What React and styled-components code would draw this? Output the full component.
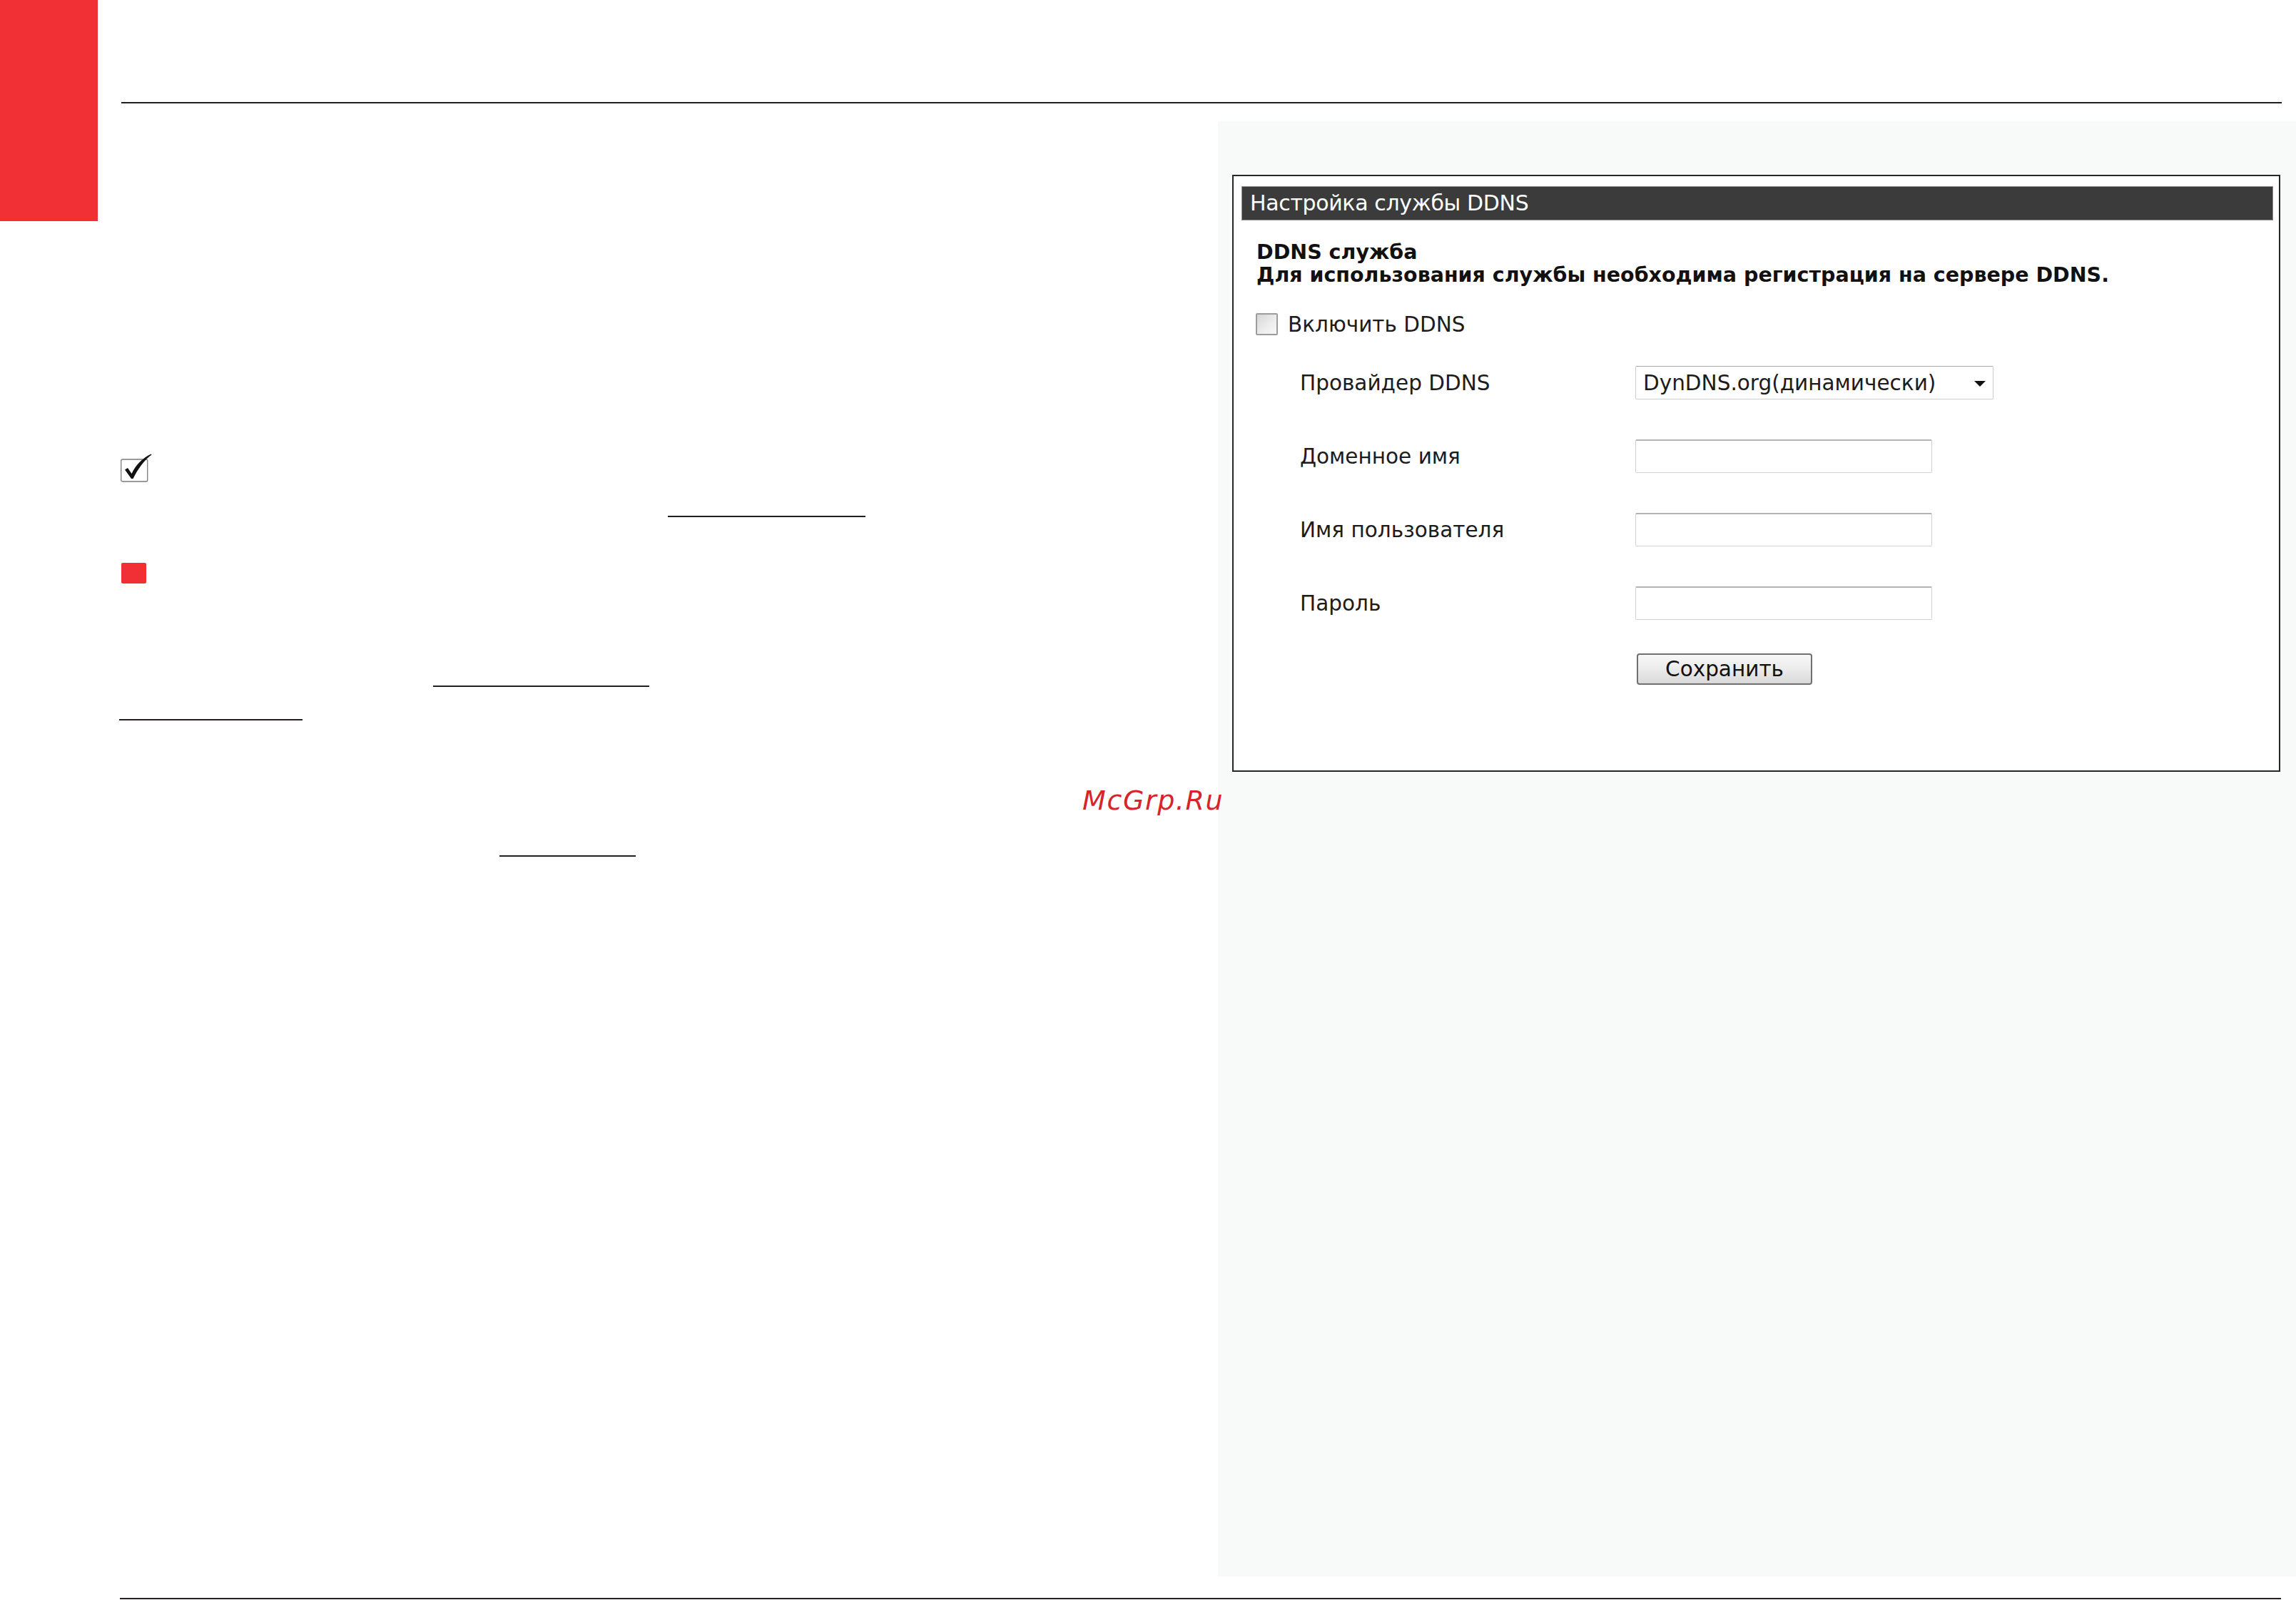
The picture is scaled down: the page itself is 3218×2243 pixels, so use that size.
import React from "react";
import styled, { createGlobalStyle } from "styled-components";

const Global = createGlobalStyle`
  html, body { margin: 0; padding: 0; background: #ffffff; }
  body { width: 3218px; height: 2243px; overflow: hidden; font-family: "DejaVu Sans", Verdana, sans-serif; }
  * { box-sizing: border-box; }
`;

const Page = styled.div`
  display: flex;
  width: 3218px;
  height: 2243px;
  background: #ffffff;
`;

const RedTab = styled.div`
  flex-shrink: 0;
  width: 137px;
  height: 310px;
  background: #f03034;
`;

const Main = styled.div`
  flex: 1;
  display: flex;
  flex-direction: column;
  padding-left: 33px;
`;

const HRule = styled.div`
  height: 2px;
  background: #231f20;
  margin-top: ${(p) => p.$top}px;
  margin-left: ${(p) => p.$left || 0}px;
  margin-right: ${(p) => p.$right || 0}px;
`;

const Body = styled.div`
  position: relative;
  display: flex;
  height: 2065px;
`;

const LeftCol = styled.div`
  width: 1537px;
  flex-shrink: 0;
  display: flex;
  flex-direction: column;
  align-items: flex-start;
`;

const LinkLine = styled.div`
  height: 2px;
  background: #231f20;
  margin-top: ${(p) => p.$top}px;
  margin-left: ${(p) => p.$left}px;
  width: ${(p) => p.$width}px;
`;

const CheckIcon = styled.svg`
  display: block;
  margin-top: ${(p) => p.$top}px;
  margin-left: -1px;
`;

const RedMark = styled.div`
  width: 35px;
  height: 29px;
  background: #f03034;
  border-radius: 2px;
  margin-top: ${(p) => p.$top}px;
`;

const Watermark = styled.div`
  position: absolute;
  left: 1347px;
  top: 958px;
  font-family: "DejaVu Sans", Verdana, sans-serif;
  font-style: italic;
  font-size: 38px;
  line-height: 38px;
  letter-spacing: 1.6px;
  color: #d6242a;
  white-space: nowrap;
`;

const GrayPanel = styled.div`
  flex: 1;
  margin-top: 25px;
  height: 2040px;
  background: #f8f9f9;
  padding: 75px 22px 0 20px;
`;

const Box = styled.div`
  background: #ffffff;
  border: 2px solid #262626;
  height: 837px;
  padding: 14px 8px 0 11px;
`;

const Header = styled.div`
  height: 48px;
  background: #3b3b3b;
  border: 1px solid #8c8c8c;
  color: #ffffff;
  font-family: "DejaVu Sans", Tahoma, sans-serif;
  font-size: 30px;
  letter-spacing: -0.35px;
  line-height: 46px;
  padding-left: 11px;
  white-space: nowrap;
`;

const Content = styled.div`
  padding-left: 21px;
  padding-top: 29px;
  display: flex;
  flex-direction: column;
  align-items: flex-start;
`;

const Title = styled.div`
  font-family: "DejaVu Sans", Verdana, sans-serif;
  font-weight: bold;
  font-size: 28.5px;
  line-height: 31.5px;
  color: #111111;
  white-space: nowrap;
`;

const CheckRow = styled.div`
  display: flex;
  align-items: center;
  margin-top: 38px;
  margin-left: -1px;
  height: 31px;
`;

const CheckBox = styled.div`
  width: 31px;
  height: 31px;
  border: 2px solid #9c9c9c;
  border-radius: 2px;
  background: linear-gradient(135deg, #d6d6d6 0%, #eeeeee 60%, #f8f8f8 100%);
`;

const Label = styled.div`
  font-family: "DejaVu Sans", Verdana, sans-serif;
  font-size: 29.5px;
  color: #1c1c1c;
  white-space: nowrap;
  margin-left: ${(p) => p.$gap || 0}px;
`;

const Form = styled.div`
  display: flex;
  flex-direction: column;
  margin-left: 61px;
`;

const FormRow = styled.div`
  display: grid;
  grid-template-columns: 470px auto;
  align-items: center;
  margin-top: ${(p) => p.$top}px;
`;

const Select = styled.div`
  width: 502px;
  height: 47px;
  border: 1px solid #cdcdcd;
  border-top-color: #a9a9a9;
  border-radius: 2px;
  background: #ffffff;
  display: flex;
  align-items: center;
  justify-content: space-between;
  padding: 0 10px 0 10px;
  font-family: "DejaVu Sans", Verdana, sans-serif;
  font-size: 29.5px;
  color: #1c1c1c;
`;

const Arrow = styled.span`
  width: 0;
  height: 0;
  border-left: 8.5px solid transparent;
  border-right: 8.5px solid transparent;
  border-top: 8px solid #111111;
  margin-top: 2px;
`;

const TextInput = styled.div`
  width: 416px;
  height: 47px;
  border: 1px solid #d2d2d2;
  border-top: 2px solid #b2b2b2;
  border-radius: 2px;
  background: #ffffff;
`;

const Button = styled.div`
  width: 246px;
  height: 44px;
  margin-left: 2px;
  border: 2px solid #707070;
  border-radius: 4px;
  background: linear-gradient(#f7f7f7 0%, #ebebeb 50%, #d9d9d9 100%);
  display: flex;
  align-items: center;
  justify-content: center;
  font-family: "DejaVu Sans", Verdana, sans-serif;
  font-size: 29.5px;
  color: #111111;
`;

const Spacer = styled.div``;

export default function App() {
  return (
    <>
      <Global />
      <Page>
        <RedTab />
        <Main>
          <HRule $top={143} $right={20} />
          <Body>
            <LeftCol>
              <CheckIcon $top={491} width="44" height="40" viewBox="0 0 44 40">
                <rect x="0.75" y="8" width="37" height="31" rx="2" fill="#ffffff" stroke="#7a7a7a" strokeWidth="1.3" />
                <path
                  d="M6 22.5 L10 20 L15.5 28 C20 18 30 6 43 0.5 L43.5 1.5 C33 9 24 22 17.5 35 L15 35 Z"
                  fill="#111111"
                />
              </CheckIcon>
              <LinkLine $top={47} $left={766} $width={277} />
              <RedMark $top={64} />
              <LinkLine $top={143} $left={437} $width={303} />
              <LinkLine $top={45} $left={-3} $width={257} />
              <LinkLine $top={189} $left={530} $width={191} />
            </LeftCol>
            <GrayPanel>
              <Box>
                <Header>Настройка службы DDNS</Header>
                <Content>
                  <Title>DDNS служба</Title>
                  <Title>Для использования службы необходима регистрация на сервере DDNS.</Title>
                  <CheckRow>
                    <CheckBox />
                    <Label $gap={14}>Включить DDNS</Label>
                  </CheckRow>
                  <Form>
                    <FormRow $top={43}>
                      <Label>Провайдер DDNS</Label>
                      <Select>
                        <span>DynDNS.org(динамически)</span>
                        <Arrow />
                      </Select>
                    </FormRow>
                    <FormRow $top={56}>
                      <Label>Доменное имя</Label>
                      <TextInput />
                    </FormRow>
                    <FormRow $top={56}>
                      <Label>Имя пользователя</Label>
                      <TextInput />
                    </FormRow>
                    <FormRow $top={56}>
                      <Label>Пароль</Label>
                      <TextInput />
                    </FormRow>
                    <FormRow $top={47}>
                      <Spacer />
                      <Button>Сохранить</Button>
                    </FormRow>
                  </Form>
                </Content>
              </Box>
            </GrayPanel>
            <Watermark>McGrp.Ru</Watermark>
          </Body>
          <HRule $top={30} $left={-2} $right={21} />
        </Main>
      </Page>
    </>
  );
}
